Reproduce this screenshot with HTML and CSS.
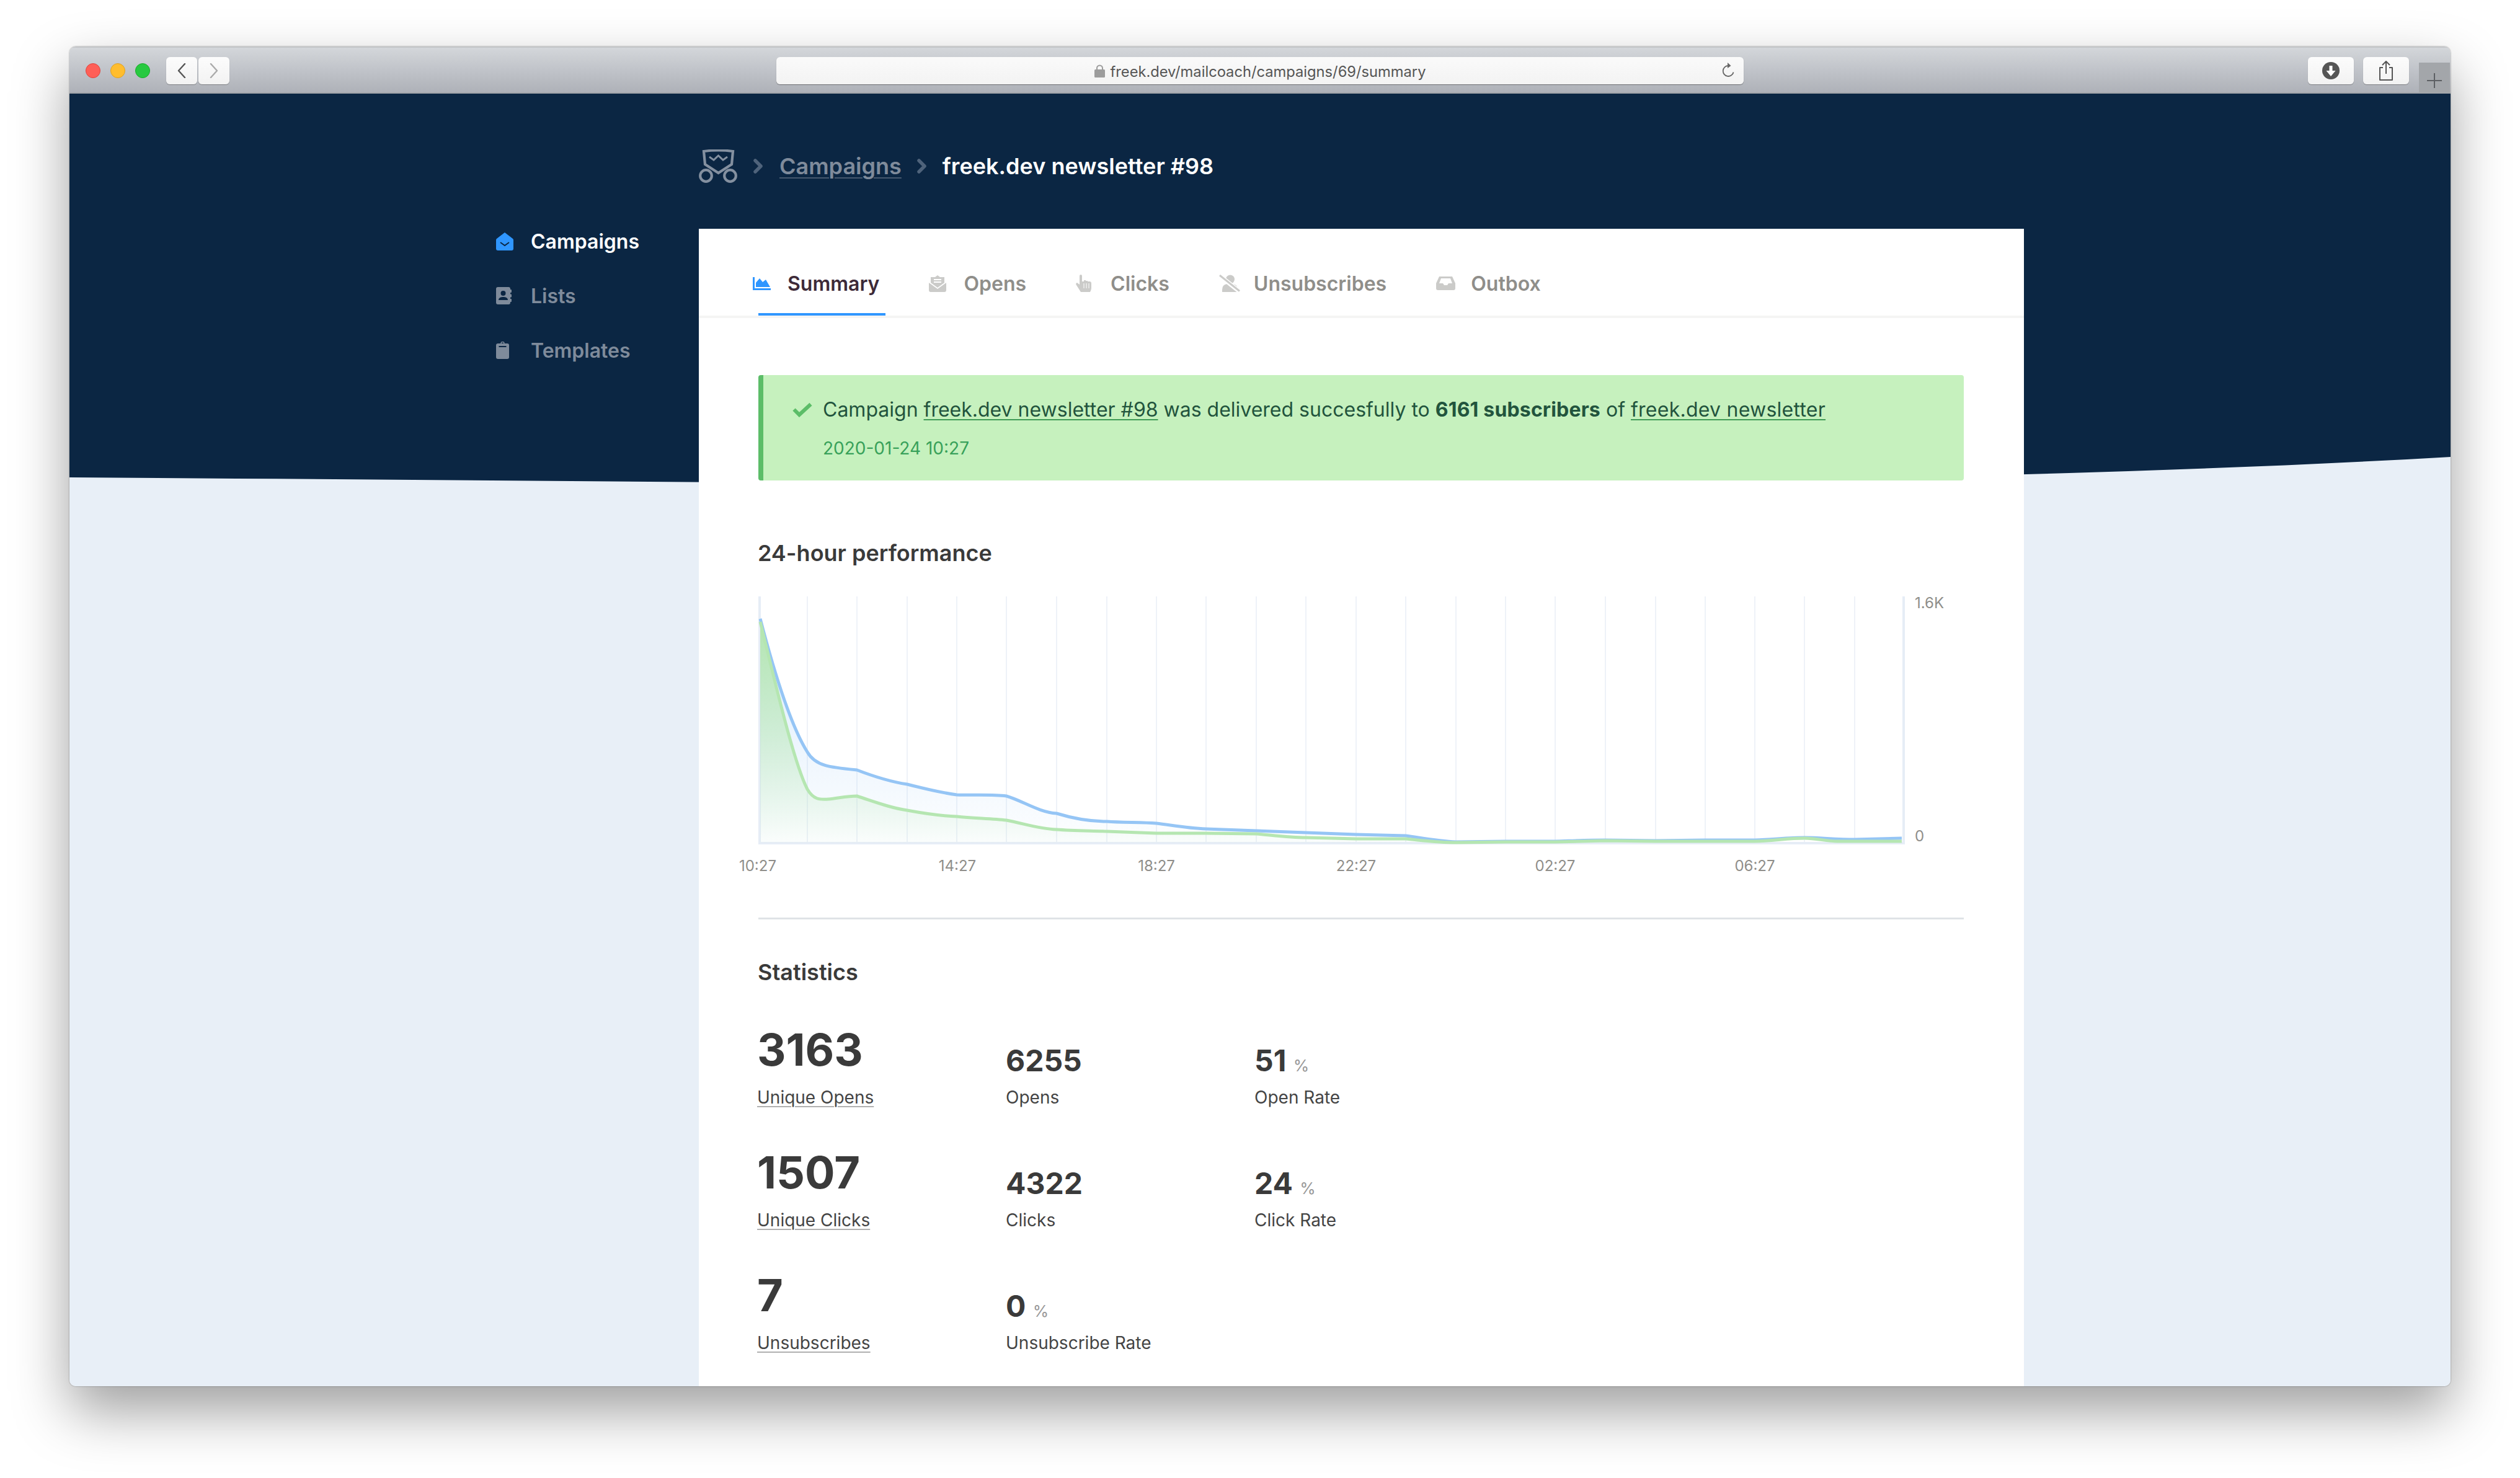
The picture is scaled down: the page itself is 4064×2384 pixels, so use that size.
FILE: index.html
```html
<!DOCTYPE html>
<html lang="en">

<head>
    <meta charset="UTF-8">
    <title>freek.dev newsletter #98</title>
    <link rel="stylesheet" href="styles.css">
</head>

<body>
    <div class="window">
        <header class="toolbar">
            <div class="lights">
                <span class="light light-red"></span>
                <span class="light light-yellow"></span>
                <span class="light light-green"></span>
            </div>
            <div class="nav-buttons">
                <span class="tool-button nav-button">
                    <svg width="14" height="24" viewBox="0 0 14 24"><path d="M12 1 L2 12 L12 23" fill="none" stroke="#555" stroke-width="2.4" stroke-linecap="round" stroke-linejoin="round"/></svg>
                </span>
                <span class="tool-button nav-button">
                    <svg width="14" height="24" viewBox="0 0 14 24"><path d="M2 1 L12 12 L2 23" fill="none" stroke="#aaa" stroke-width="2.4" stroke-linecap="round" stroke-linejoin="round"/></svg>
                </span>
            </div>
            <div class="url-bar">
                <svg width="17" height="21" viewBox="0 0 17 21"><path d="M4 9 V6 a4.5 4.5 0 0 1 9 0 V9" fill="none" stroke="#9c9c9c" stroke-width="2"/><rect y="8" width="17" height="13" rx="1.5" fill="#9c9c9c"/></svg>
                <span class="url-text">freek.dev/mailcoach/campaigns/69/summary</span>
                <svg class="reload" width="20" height="26" viewBox="0 0 20 26"><path d="M10 5 A8.5 8.5 0 1 0 18.5 15.5" fill="none" stroke="#666" stroke-width="1.8"/><path d="M9 0 L14.5 5 L9 9 Z" fill="#666"/></svg>
            </div>
            <div class="tool-actions">
                <span class="tool-button action-button">
                    <svg width="28" height="28" viewBox="0 0 28 28"><circle cx="14" cy="14" r="14" fill="#555"/><path d="M11.5 6 h5 v8 h5 L14 23 L6.500 14 h5 Z" fill="#fff"/></svg>
                </span>
                <span class="tool-button action-button">
                    <svg width="24" height="32" viewBox="0 0 24 32"><path d="M7 11 H2 V31 H22 V11 H17" fill="none" stroke="#555" stroke-width="2" stroke-linejoin="round"/><path d="M12 21 V2 M6 7 L12 1 L18 7" fill="none" stroke="#555" stroke-width="2"/></svg>
                </span>
            </div>
            <span class="new-tab">
                <svg width="24" height="24" viewBox="0 0 24 24"><path d="M0 12 H24 M12 0 V24" stroke="#5d6064" stroke-width="2"/></svg>
            </span>
        </header>

        <div class="page">
            <svg class="wave" width="3840" height="660" viewBox="0 0 3840 660"><path d="M0 0 H3840 V586 C2700 651 1200 626 0 619 Z" fill="#0b2643"/></svg>

            <div class="layout">
                <nav class="breadcrumb">
                    <svg class="logo" width="63" height="54" viewBox="0 0 63 54" fill="none" stroke="#8490a0" stroke-width="4.200">
                        <path d="M8 3 Q31 0 55 3 L53 24 L31.500 38 L10 24 Z"/>
                        <path d="M17 12 L24 17 L31.500 10 L39 17 L46 12" stroke-width="3"/>
                        <circle cx="11.500" cy="42.500" r="9.300"/>
                        <circle cx="50.500" cy="42.500" r="9.300"/>
                    </svg>
                    <svg class="crumb-arrow" width="16" height="24" viewBox="0 0 16 24"><path d="M3 3 L12 12 L3 21" fill="none" stroke="#4f637b" stroke-width="5.500" stroke-linecap="round" stroke-linejoin="round"/></svg>
                    <a class="crumb-link">Campaigns</a>
                    <svg class="crumb-arrow" width="16" height="24" viewBox="0 0 16 24"><path d="M3 3 L12 12 L3 21" fill="none" stroke="#4f637b" stroke-width="5.500" stroke-linecap="round" stroke-linejoin="round"/></svg>
                    <span class="crumb-current">freek.dev newsletter #98</span>
                </nav>

                <aside class="sidebar">
                    <a class="side-item side-item-active">
                        <span class="side-icon">
                            <svg width="28" height="29" viewBox="0 0 28 29"><path d="M14 0 L27 10 Q28 11 28 12 V26 Q28 29 25 29 H3 Q0 29 0 26 V12 Q0 11 1 10 Z" fill="#2f96ff"/><path d="M7 16 L14 21 L21 16" fill="none" stroke="#0b2643" stroke-width="2"/></svg>
                        </span>
                        Campaigns
                    </a>
                    <a class="side-item">
                        <span class="side-icon">
                            <svg width="25" height="28" viewBox="0 0 25 28"><rect width="23" height="28" rx="3" fill="#7f8b9b"/><rect x="21" y="4" width="4" height="5" rx="1" fill="#7f8b9b"/><rect x="21" y="11.500" width="4" height="5" rx="1" fill="#7f8b9b"/><rect x="21" y="19" width="4" height="5" rx="1" fill="#7f8b9b"/><circle cx="11.500" cy="10" r="4" fill="#0b2643"/><path d="M4 21 C4 17 8 16 11.500 16 S19 17 19 21 Z" fill="#0b2643"/></svg>
                        </span>
                        Lists
                    </a>
                    <a class="side-item">
                        <span class="side-icon">
                            <svg width="21" height="28" viewBox="0 0 21 28"><rect y="3" width="21" height="25" rx="3" fill="#7f8b9b"/><circle cx="10.500" cy="3" r="2.500" fill="none" stroke="#7f8b9b" stroke-width="1.500"/><path d="M4.500 8 H16.500" stroke="#0b2643" stroke-width="2"/></svg>
                        </span>
                        Templates
                    </a>
                </aside>

                <main class="card">
                    <div class="tabs">
                        <a class="tab tab-active">
                            <span class="tab-icon">
                                <svg width="29" height="21" viewBox="0 0 29 21" fill="#2f96ff"><path d="M0 0 H3 V18 H29 V21 H0 Z"/><path d="M5 16 V9 L11 2 L16 8 L21 4 L28 16 Z"/></svg>
                            </span>
                            Summary
                        </a>
                        <a class="tab">
                            <span class="tab-icon">
                                <svg width="28" height="28" viewBox="0 0 28 28"><path d="M0 13 L14 23 L28 13 V25 Q28 28 25 28 H3 Q0 28 0 25 Z" fill="#cbcbc9"/><path d="M3 4 H10 L14 1 L18 4 H25 V13 L14 21 L3 13 Z" fill="#cbcbc9"/><path d="M8 8 H20 M8 12 H20" stroke="#fff" stroke-width="2"/></svg>
                            </span>
                            Opens
                        </a>
                        <a class="tab">
                            <span class="tab-icon">
                                <svg width="25" height="28" viewBox="0 0 25 28"><path d="M6 2 A2 2 0 0 1 10 2 V11 H13 V9 H16 V10 H19 V11 H22 Q25 11 25 14 V22 Q25 24 23 28 H8 L1 17 Q-1 14 2 13 L6 16 Z" fill="#cbcbc9"/><path d="M13 14 V22 M17 14 V22 M21 14 V22" stroke="#fff" stroke-width="1"/></svg>
                            </span>
                            Clicks
                        </a>
                        <a class="tab">
                            <span class="tab-icon">
                                <svg width="34" height="28" viewBox="0 0 34 28"><circle cx="18" cy="7.500" r="7" fill="#cbcbc9"/><path d="M5 28 V24 Q5 16 13 15 H22 Q30 16 30 24 V28 Z" fill="#cbcbc9"/><path d="M0 1 L34 28" stroke="#fff" stroke-width="7"/><path d="M1 1 L33 26.500" stroke="#cbcbc9" stroke-width="3"/></svg>
                            </span>
                            Unsubscribes
                        </a>
                        <a class="tab">
                            <span class="tab-icon">
                                <svg width="31" height="22" viewBox="0 0 31 22"><path d="M5 0 H26 L31 11 V19 Q31 22 28 22 H3 Q0 22 0 19 V11 Z" fill="#cbcbc9"/><path d="M8 3 H23 L26 11 H20 L18 14 H13 L11 11 H5 Z" fill="#fff"/></svg>
                            </span>
                            Outbox
                        </a>
                    </div>

                    <div class="content">
                        <div class="alert">
                            <div class="alert-line">
                                <svg class="alert-check" width="32" height="24" viewBox="0 0 32 24"><path d="M2.500 11.500 L11 20 L29.500 3" fill="none" stroke="#5cbd68" stroke-width="6"/></svg>
                                <span>Campaign <a class="alert-link">freek.dev newsletter #98</a> was delivered succesfully to <strong>6161 subscribers</strong> of <a class="alert-link alert-link-list">freek.dev newsletter</a></span>
                            </div>
                            <div class="alert-date">2020-01-24 10:27</div>
                        </div>

                        <h2 class="section-title section-title-chart">24-hour performance</h2>

                        <svg class="chart" width="1944" height="460" viewBox="1223 962 1944 460">
                            <defs>
                                <linearGradient id="blueFill" gradientUnits="userSpaceOnUse" x1="0" y1="1000" x2="0" y2="1360">
                                    <stop offset="0" stop-color="#93c5f5" stop-opacity="0.35"/>
                                    <stop offset="1" stop-color="#93c5f5" stop-opacity="0.02"/>
                                </linearGradient>
                                <linearGradient id="greenFill" gradientUnits="userSpaceOnUse" x1="0" y1="1000" x2="0" y2="1360">
                                    <stop offset="0" stop-color="#b4e6b0" stop-opacity="1"/>
                                    <stop offset="1" stop-color="#b4e6b0" stop-opacity="0.03"/>
                                </linearGradient>
                            </defs>
                            <path class="chart-grid" d="M1302 962 V1358 M1382 962 V1358 M1463 962 V1358 M1543 962 V1358 M1623 962 V1358 M1704 962 V1358 M1785 962 V1358 M1865 962 V1358 M1945 962 V1358 M2026 962 V1358 M2106 962 V1358 M2187 962 V1358 M2267 962 V1358 M2348 962 V1358 M2428 962 V1358 M2508 962 V1358 M2589 962 V1358 M2670 962 V1358 M2750 962 V1358 M2830 962 V1358 M2910 962 V1358 M2991 962 V1358"/>
                            <path class="chart-axis" d="M1225 962 V1360 M1223 1360 H3072 M3070 962 V1362"/>
                            <path fill="url(#blueFill)" d="M1226 998 C1250 1090 1275 1170 1302 1213 C1315 1236 1340 1238 1382 1242 C1408 1252 1436 1261 1463 1265 C1490 1272 1515 1278 1543 1282 C1570 1283 1600 1281 1623 1284 C1650 1292 1675 1310 1704 1312 C1730 1320 1760 1325 1785 1325 C1810 1327 1840 1326 1865 1328 C1890 1331 1915 1336 1945 1337 L2026 1340 L2106 1343 L2187 1346 L2267 1348 C2295 1352 2320 1357 2348 1358 L3067 1358 V1358 H1226 Z"/>
                            <path fill="url(#greenFill)" d="M1226 1003 C1250 1100 1280 1230 1302 1273 C1312 1290 1322 1290 1336 1289 C1350 1288 1365 1284 1382 1284 C1410 1293 1435 1303 1463 1307 C1490 1312 1515 1316 1543 1317 C1570 1320 1600 1320 1623 1323 C1650 1328 1675 1337 1704 1338 C1730 1340 1760 1340 1785 1341 L1865 1344 L1945 1344 L2026 1345 C2050 1347 2080 1351 2106 1351 L2187 1353 L2267 1353 C2295 1356 2320 1359 2348 1359 V1359 H1226 Z"/>
                            <path class="chart-line chart-line-blue" d="M1226 998 C1250 1090 1275 1170 1302 1213 C1315 1236 1340 1238 1382 1242 C1408 1252 1436 1261 1463 1265 C1490 1272 1515 1278 1543 1282 C1570 1283 1600 1281 1623 1284 C1650 1292 1675 1310 1704 1312 C1730 1320 1760 1325 1785 1325 C1810 1327 1840 1326 1865 1328 C1890 1331 1915 1336 1945 1337 L2026 1340 L2106 1343 L2187 1346 L2267 1348 C2295 1352 2320 1357 2348 1358 L2428 1357 L2508 1357 C2540 1356 2560 1355 2589 1355 L2670 1356 L2750 1355 L2830 1355 C2860 1354 2885 1351 2910 1351 C2935 1351 2960 1354 2991 1354 L3067 1352"/>
                            <path class="chart-line chart-line-green" d="M1226 1003 C1250 1100 1280 1230 1302 1273 C1312 1290 1322 1290 1336 1289 C1350 1288 1365 1284 1382 1284 C1410 1293 1435 1303 1463 1307 C1490 1312 1515 1316 1543 1317 C1570 1320 1600 1320 1623 1323 C1650 1328 1675 1337 1704 1338 C1730 1340 1760 1340 1785 1341 L1865 1344 L1945 1344 L2026 1345 C2050 1347 2080 1351 2106 1351 L2187 1353 L2267 1353 C2295 1356 2320 1359 2348 1359 L2428 1358 L2508 1358 L2589 1356 L2670 1357 L2830 1357 C2860 1356 2885 1352 2910 1352 C2930 1352 2945 1357 2963 1357 L3067 1357"/>
                            <text class="chart-label" x="1222" y="1405" text-anchor="middle">10:27</text>
                            <text class="chart-label" x="1544" y="1405" text-anchor="middle">14:27</text>
                            <text class="chart-label" x="1865" y="1405" text-anchor="middle">18:27</text>
                            <text class="chart-label" x="2187" y="1405" text-anchor="middle">22:27</text>
                            <text class="chart-label" x="2508" y="1405" text-anchor="middle">02:27</text>
                            <text class="chart-label" x="2830" y="1405" text-anchor="middle">06:27</text>
                            <text class="chart-label" x="3088" y="981">1.6K</text>
                            <text class="chart-label" x="3088" y="1357">0</text>
                        </svg>

                        <hr class="divider">

                        <h2 class="section-title section-title-stats">Statistics</h2>

                        <div class="stats">
                            <div class="stat"><div class="stat-big">3163</div><a class="stat-label stat-label-link">Unique Opens</a></div>
                            <div class="stat"><div class="stat-value">6255</div><span class="stat-label">Opens</span></div>
                            <div class="stat"><div class="stat-value">51 <span class="stat-unit">%</span></div><span class="stat-label">Open Rate</span></div>
                            <div class="stat"><div class="stat-big">1507</div><a class="stat-label stat-label-link">Unique Clicks</a></div>
                            <div class="stat"><div class="stat-value">4322</div><span class="stat-label">Clicks</span></div>
                            <div class="stat"><div class="stat-value">24 <span class="stat-unit">%</span></div><span class="stat-label">Click Rate</span></div>
                            <div class="stat"><div class="stat-big">7</div><a class="stat-label stat-label-link">Unsubscribes</a></div>
                            <div class="stat"><div class="stat-value">0 <span class="stat-unit">%</span></div><span class="stat-label">Unsubscribe Rate</span></div>
                        </div>
                    </div>
                </main>
            </div>
        </div>
    </div>
</body>

</html>
```

FILE: styles.css
```css
:root {
    --navy: #0b2643;
    --page-bg: #e8eff7;
    --muted-nav: #7f8b9b;
    --text: #3a3a3a;
}

* {
    margin: 0;
    padding: 0;
    box-sizing: border-box;
}

body {
    width: 4064px;
    height: 2384px;
    overflow: hidden;
    background: #fff;
    font-family: Inter, "Noto Sans", sans-serif;
    color: var(--text);
    padding: 75px 112px 0;
}

.window {
    width: 3840px;
    height: 2161px;
    border-radius: 10px;
    overflow: hidden;
    box-shadow: 0 40px 90px rgba(0, 0, 0, 0.38), 0 0 2px rgba(0, 0, 0, 0.5);
    position: relative;
}

/* browser chrome */
.toolbar {
    height: 76px;
    display: flex;
    align-items: flex-start;
    background: linear-gradient(#d3d6da, #aeb1b8);
    border-top: 2px solid #c4c6c9;
    border-bottom: 2px solid #a3a6ab;
    padding: 15px 0 0 26px;
}

.lights {
    display: flex;
    gap: 16px;
    margin-top: 10px;
}

.light {
    width: 24px;
    height: 24px;
    border-radius: 50%;
}

.light-red {
    background: #ff5f57;
    border: 1px solid #e0443e;
}

.light-yellow {
    background: #ffbd2e;
    border: 1px solid #dea123;
}

.light-green {
    background: #28c940;
    border: 1px solid #1aab29;
}

.nav-buttons {
    display: flex;
    gap: 2px;
    margin-left: 26px;
}

.tool-button {
    display: flex;
    align-items: center;
    justify-content: center;
    height: 44px;
    border-radius: 6px;
    background: linear-gradient(#fcfcfc, #f2f2f2);
    box-shadow: 0 1px 1px rgba(0, 0, 0, 0.3);
}

.nav-button {
    width: 50px;
}

.url-bar {
    position: relative;
    width: 1560px;
    height: 44px;
    margin-left: 882px;
    display: flex;
    align-items: center;
    justify-content: center;
    gap: 9px;
    border-radius: 6px;
    background: linear-gradient(#fafafa, #f3f3f3);
    box-shadow: 0 1px 1px rgba(0, 0, 0, 0.4);
}

.url-text {
    padding-top: 2px;
    font-size: 23.7px;
    color: #555;
}

.reload {
    position: absolute;
    right: 15px;
    top: 9px;
}

.tool-actions {
    display: flex;
    gap: 15px;
    margin-left: 910px;
}

.action-button {
    width: 74px;
}

.new-tab {
    width: 50px;
    height: 49px;
    margin: 9px 0 0 16px;
    display: flex;
    align-items: center;
    justify-content: center;
    padding-top: 8px;
    background: #a3a6aa;
}

/* page */
.page {
    position: relative;
    height: 2085px;
    background: var(--page-bg);
    overflow: hidden;
}

.wave {
    position: absolute;
    top: 0;
    left: 0;
}

.layout {
    position: relative;
    width: 2464px;
    height: 100%;
    margin: 0 auto;
    display: grid;
    grid-template-columns: 327px 2137px;
    grid-template-rows: 218px 1fr;
}

.breadcrumb {
    grid-column: 2;
    display: flex;
    align-items: center;
    padding-top: 16px;
    font-size: 36px;
    font-weight: 600;
}

.logo {
    margin-right: 25px;
}

.crumb-link {
    margin: 0 25px 0 26px;
    color: var(--muted-nav);
    text-decoration: underline;
    text-decoration-color: #46596f;
    text-decoration-thickness: 2px;
    text-underline-offset: 5px;
}

.crumb-current {
    margin-left: 25px;
    color: #fff;
    letter-spacing: 0.03px;
}

.sidebar {
    grid-column: 1;
    grid-row: 2;
    margin-top: -24px;
}

.side-item {
    display: flex;
    align-items: center;
    height: 88px;
    font-size: 32px;
    font-weight: 600;
    color: var(--muted-nav);
}

.side-item-active {
    color: #fff;
}

.side-icon {
    display: flex;
    width: 56px;
}

.card {
    grid-column: 2;
    grid-row: 2;
    background: #fff;
}

.tabs {
    display: flex;
    gap: 80px;
    height: 144px;
    padding-left: 87px;
    border-bottom: 4px solid #f5f5f4;
}

.tab {
    position: relative;
    display: flex;
    align-items: center;
    height: 140px;
    padding-top: 36px;
    font-size: 32px;
    font-weight: 600;
    color: #8f8e8a;
}

.tab-active {
    color: #3d2a38;
}

.tab-active::after {
    content: "";
    position: absolute;
    left: 9px;
    right: -10px;
    bottom: 0;
    height: 4px;
    background: #2f96ff;
}

.tab-icon {
    display: flex;
    width: 56px;
}

.content {
    padding: 92px 97px 0 96px;
}

.alert {
    height: 170px;
    padding: 36px 0 0 47px;
    border-left: 8px solid #5cbd68;
    border-radius: 4px;
    background: #c6f1be;
    font-size: 32px;
    line-height: 40px;
    color: #22543d;
}

.alert-line {
    display: flex;
    align-items: center;
}

.alert-check {
    margin-right: 17px;
}

.alert-link {
    text-decoration: underline;
    text-decoration-color: #409a55;
    text-decoration-thickness: 2px;
    text-underline-offset: 4px;
}

.alert-link-list {
    letter-spacing: 0.25px;
}

.alert-line strong {
    font-weight: 700;
    letter-spacing: 0.16px;
}

.alert-date {
    margin: 22px 0 0 49px;
    font-size: 28px;
    color: #38a15a;
}

.section-title {
    margin-left: -1px;
    font-size: 36px;
    line-height: 48px;
    font-weight: 600;
    color: var(--text);
}

.section-title-chart {
    margin-top: 93px;
}

.chart {
    display: block;
    margin-top: 46px;
    overflow: visible;
}

.chart-grid {
    fill: none;
    stroke: #eef2f8;
    stroke-width: 2;
}

.chart-axis {
    fill: none;
    stroke: #e6edf6;
    stroke-width: 4;
}

.chart-line {
    fill: none;
    stroke-width: 5;
    stroke-linejoin: round;
}

.chart-line-blue {
    stroke: #95c5f5;
}

.chart-line-green {
    stroke: #b5e6b1;
}

.chart-label {
    font-family: Inter, sans-serif;
    font-size: 24px;
    fill: #8f8e8a;
}

.divider {
    height: 3px;
    margin-top: 58px;
    border: none;
    background: #dfe3e6;
}

.section-title-stats {
    margin-top: 61px;
}

.stats {
    display: grid;
    grid-template-columns: repeat(3, 401px);
    grid-auto-rows: 198px;
    margin-left: -2px;
}

.stat {
    display: flex;
    flex-direction: column;
    justify-content: flex-end;
    align-items: flex-start;
}

.stat-big {
    margin-bottom: 21px;
    font-size: 72px;
    line-height: 72px;
    font-weight: 700;
}

.stat-value {
    margin-bottom: 15px;
    font-size: 48px;
    line-height: 48px;
    font-weight: 700;
}

.stat-unit {
    font-size: 26px;
    line-height: 1;
    font-weight: 400;
    color: #999;
}

.stat-label {
    font-size: 28px;
    line-height: 40px;
    color: #444;
}

.stat-label-link {
    text-decoration: underline;
    text-decoration-color: #b0b0b0;
    text-decoration-thickness: 2px;
    text-underline-offset: 4px;
}
```
